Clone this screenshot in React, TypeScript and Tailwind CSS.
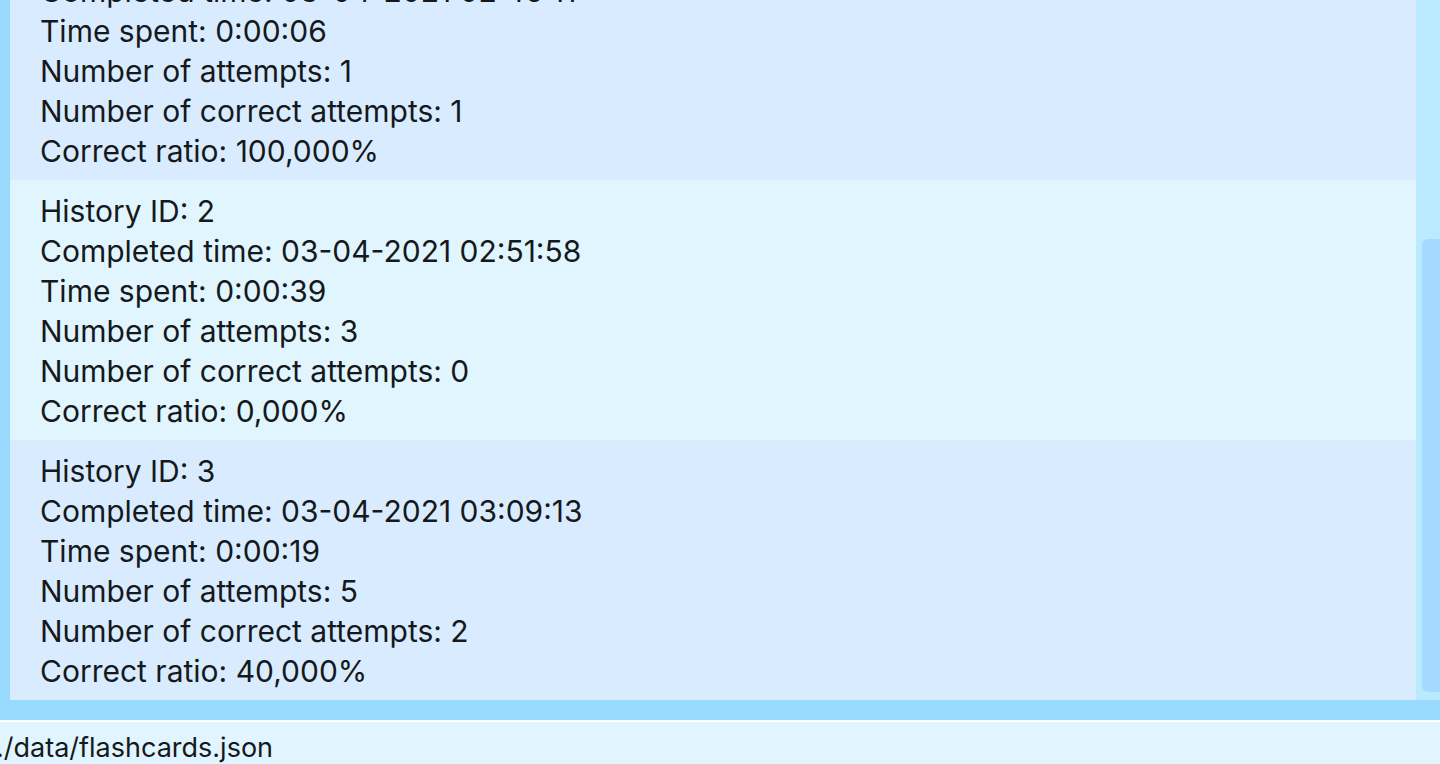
type Entry = {
  id: number;
  completed: string;
  spent: string;
  attempts: number;
  correct: number;
  ratio: string;
};

const entries: Entry[] = [
  { id: 1, completed: "03-04-2021 02:46:11", spent: "0:00:06", attempts: 1, correct: 1, ratio: "100,000%" },
  { id: 2, completed: "03-04-2021 02:51:58", spent: "0:00:39", attempts: 3, correct: 0, ratio: "0,000%" },
  { id: 3, completed: "03-04-2021 03:09:13", spent: "0:00:19", attempts: 5, correct: 2, ratio: "40,000%" },
];

function HistoryItem({ entry }: { entry: Entry }) {
  return (
    <li className="shrink-0 pt-[11px] pb-[9px] pl-[30px] odd:bg-[#d9ecff] even:bg-[#e1f5ff]">
      <p>History ID: {entry.id}</p>
      <p>Completed time: {entry.completed}</p>
      <p>Time spent: {entry.spent}</p>
      <p>Number of attempts: {entry.attempts}</p>
      <p>Number of correct attempts: {entry.correct}</p>
      <p>Correct ratio: {entry.ratio}</p>
    </li>
  );
}

export default function App() {
  return (
    <div className="flex h-screen flex-col overflow-hidden bg-[#99dbff] font-['Inter',sans-serif] text-[#15191c]">
      <main className="flex min-h-0 flex-1 pb-5 pl-[10px]">
        <ul className="flex min-w-0 flex-1 flex-col justify-end overflow-hidden text-[30px] leading-10">
          {entries.map((entry) => (
            <HistoryItem key={entry.id} entry={entry} />
          ))}
        </ul>
        <div className="flex w-6 flex-col justify-end bg-[#b9eaff] pb-2 pl-[6px]">
          <div className="h-[65.5%] rounded-l-md bg-[#a5dafe]" />
        </div>
      </main>
      <footer className="h-11 overflow-hidden border-t-2 border-white bg-[#e0f5ff]">
        <p className="-ml-1 pt-1.5 text-[27px] leading-10">./data/flashcards.json</p>
      </footer>
    </div>
  );
}
